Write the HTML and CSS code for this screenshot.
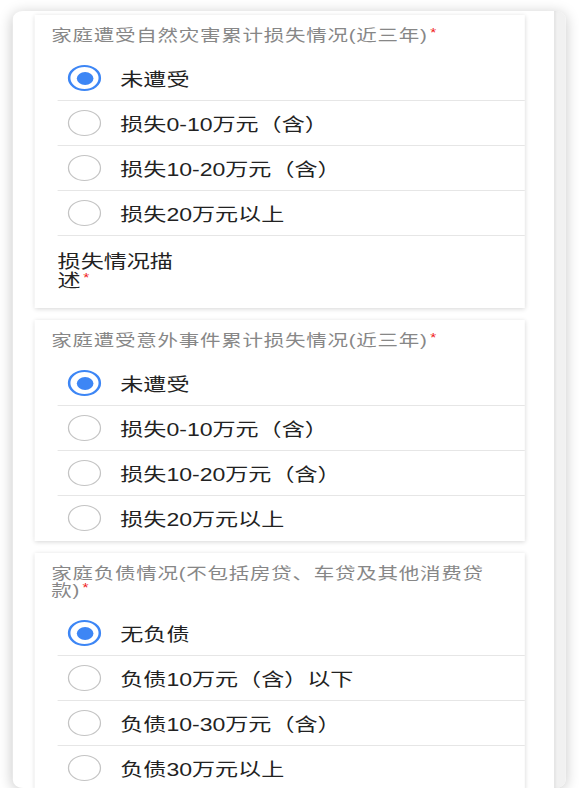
FILE: index.html
```html
<!DOCTYPE html>
<html lang="zh-CN">
<head>
    <meta charset="UTF-8">
    <meta name="viewport" content="width=device-width, initial-scale=1.0">
    <title>家庭风险调查</title>
    <link rel="stylesheet" href="styles.css">
</head>
<body>
    <div class="stage">
        <div class="phone">
            <div class="list">
                <div class="card">
                    <div class="card-title">家庭遭受自然灾害累计损失情况(近三年)<span class="req">*</span></div>
                    <label class="option"><span class="radio checked"></span><span class="option-text">未遭受</span></label>
                    <label class="option"><span class="radio"></span><span class="option-text">损失0-10万元（含）</span></label>
                    <label class="option"><span class="radio"></span><span class="option-text">损失10-20万元（含）</span></label>
                    <label class="option"><span class="radio"></span><span class="option-text">损失20万元以上</span></label>
                    <div class="field">
                        <div class="field-label">损失情况描<br>述<span class="req">*</span></div>
                        <div class="field-input"></div>
                    </div>
                </div>

                <div class="card">
                    <div class="card-title">家庭遭受意外事件累计损失情况(近三年)<span class="req">*</span></div>
                    <label class="option"><span class="radio checked"></span><span class="option-text">未遭受</span></label>
                    <label class="option"><span class="radio"></span><span class="option-text">损失0-10万元（含）</span></label>
                    <label class="option"><span class="radio"></span><span class="option-text">损失10-20万元（含）</span></label>
                    <label class="option"><span class="radio"></span><span class="option-text">损失20万元以上</span></label>
                </div>

                <div class="card">
                    <div class="card-title">家庭负债情况(不包括房贷、车贷及其他消费贷<br>款)<span class="req">*</span></div>
                    <label class="option"><span class="radio checked"></span><span class="option-text">无负债</span></label>
                    <label class="option"><span class="radio"></span><span class="option-text">负债10万元（含）以下</span></label>
                    <label class="option"><span class="radio"></span><span class="option-text">负债10-30万元（含）</span></label>
                    <label class="option"><span class="radio"></span><span class="option-text">负债30万元以上</span></label>
                </div>
            </div>
            <div class="scrollbar"></div>
        </div>
    </div>
</body>
</html>
```

FILE: styles.css
```css
html, body {
    margin: 0;
    padding: 0;
    background-color: #fff;
    overflow: hidden;
}
body {
    font-family: "Liberation Sans", "Noto Sans CJK SC", sans-serif;
    color: #222;
}
/* the capture is stretched sideways, so the whole page is too */
.stage {
    width: 452px;
    padding: 11px 0 0 10px;
    transform: scaleX(1.28);
    transform-origin: 0 0;
}
.phone {
    display: flex;
    width: 432px;
    height: 777px;
    background-color: #fff;
    border-radius: 8px;
    box-shadow: 0 2px 12px rgba(0,0,0,0.22);
    overflow: hidden;
}
.list {
    flex: 1;
    padding: 4px 23px 0 17px;
}
.scrollbar {
    width: 9px;
    background-color: #f1f1f1;
    box-shadow: inset 1px 0 2px rgba(0,0,0,0.07);
}
.card {
    background-color: #fff;
    box-shadow: 0 1px 4px rgba(0,0,0,0.16);
    margin-bottom: 12px;
    padding-bottom: 1px;
}
.card-title {
    font-size: 16px;
    line-height: 17px;
    letter-spacing: 0.6px;
    color: #878787;
    padding: 12px 24px 12px 13px;
}
.req {
    color: #f01c1c;
    font-size: 12px;
    line-height: 12px;
    vertical-align: top;
    margin-left: 2px;
}
.option {
    display: flex;
    align-items: center;
    height: 44px;
    margin-left: 18px;
    border-bottom: 1px solid #e6e6e6;
}
.card > .option:last-child {
    border-bottom: none;
}
.radio {
    box-sizing: border-box;
    width: 26px;
    height: 26px;
    margin-left: 8px;
    border: 1px solid #c4c4c4;
    border-radius: 50%;
    display: flex;
    align-items: center;
    justify-content: center;
}
.radio.checked {
    border: 2.5px solid #3d86f5;
}
.radio.checked::after {
    content: "";
    width: 13px;
    height: 13px;
    border-radius: 50%;
    background-color: #3d86f5;
}
.option-text {
    font-size: 18px;
    margin-left: 15px;
    color: #222;
}
.field {
    display: flex;
    margin-left: 18px;
    padding: 17px 0 16px;
}
.field-label {
    width: 92px;
    font-size: 18px;
    line-height: 19px;
}
.field-input {
    flex: 1;
}
```
